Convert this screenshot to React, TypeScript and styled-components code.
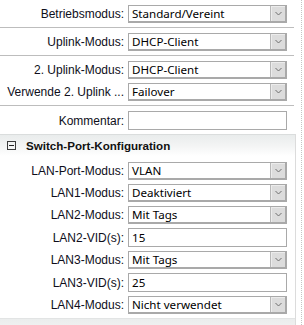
import React from 'react';
import styled, { createGlobalStyle } from 'styled-components';

const GlobalStyle = createGlobalStyle`
  html, body {
    margin: 0;
    padding: 0;
    background: #ffffff;
  }
  body {
    font-family: 'Liberation Sans', Arial, sans-serif;
    font-size: 12px;
    color: #111111;
  }
`;

const Page = styled.div`
  width: 301px;
  min-height: 325px;
  border-right: 1px dotted #c4c4c4;
  overflow: hidden;
`;

const TopArea = styled.div`
  width: 294px;
`;

const Group = styled.div<{ $divider?: boolean; $top?: number }>`
  display: flex;
  flex-direction: column;
  gap: 4px;
  padding: ${(p) => p.$top ?? 5}px 0 4px;
  border-bottom: ${(p) => (p.$divider ? '1px solid #bdbdbd' : 'none')};
`;

const Row = styled.div`
  display: grid;
  grid-template-columns: 124px 159px;
  column-gap: 4px;
  align-items: center;
`;

const Label = styled.label`
  text-align: right;
  white-space: nowrap;
  overflow: hidden;
  font-size: 12px;
  color: #0e0e1a;
`;

const SelectBox = styled.div`
  display: flex;
  height: 18px;
  box-sizing: border-box;
  border: 1px solid #a9a9a9;
  border-right-width: 2px;
  border-bottom-width: 2px;
  background: #ffffff;
`;

const SelectText = styled.span`
  flex: 1;
  padding-left: 3px;
  line-height: 15px;
  font-family: 'Noto Sans', 'DejaVu Sans', sans-serif;
  font-size: 11.6px;
  color: #000000;
  white-space: nowrap;
  overflow: hidden;
`;

const ArrowButton = styled.span`
  width: 15px;
  box-sizing: border-box;
  border-left: 1px solid #b8b8b8;
  background: #dcdcdc;
  box-shadow: inset 1px 1px 0 #ececec;
  display: flex;
  align-items: center;
  justify-content: center;
`;

const TextBox = styled.div`
  height: 19px;
  box-sizing: border-box;
  border: 1px solid #a9a9a9;
  background: #ffffff;
  padding-left: 3px;
  line-height: 17px;
  font-family: 'Noto Sans', 'DejaVu Sans', sans-serif;
  font-size: 11.6px;
  color: #000000;
`;

const Panel = styled.section`
  width: 296px;
  box-sizing: border-box;
  border-right: 1px solid #dcdcdc;
`;

const SectionHeader = styled.div`
  height: 22px;
  box-sizing: border-box;
  border-top: 1px solid #dadddd;
  background: linear-gradient(#e9ecec, #f4f5f5 55%, #ffffff);
  display: flex;
  align-items: center;
  gap: 10px;
  padding-left: 7px;
`;

const Toggle = styled.span`
  width: 9px;
  height: 9px;
  box-sizing: border-box;
  border: 1px solid #3c3c3c;
  position: relative;
  &::after {
    content: '';
    position: absolute;
    left: 1px;
    right: 1px;
    top: 3px;
    height: 1px;
    background: #222222;
  }
`;

const SectionTitle = styled.span`
  font-weight: bold;
  font-size: 11.6px;
  color: #111111;
`;

const NextBand = styled.div`
  height: 22px;
  border-top: 1px solid #e2e4e4;
  background: linear-gradient(#ebeded, #f7f8f8);
`;

const Chevron = () => (
  <svg width="7" height="5" viewBox="0 0 7 5">
    <path d="M0.5 1 L3.5 4 L6.5 1" fill="none" stroke="#6e6e6e" strokeWidth="1" />
  </svg>
);

const Select = ({ value }: { value: string }) => (
  <SelectBox>
    <SelectText>{value}</SelectText>
    <ArrowButton>
      <Chevron />
    </ArrowButton>
  </SelectBox>
);

type Field = { label: string; select?: string; input?: string };

const ports: Field[] = [
  { label: 'LAN-Port-Modus:', select: 'VLAN' },
  { label: 'LAN1-Modus:', select: 'Deaktiviert' },
  { label: 'LAN2-Modus:', select: 'Mit Tags' },
  { label: 'LAN2-VID(s):', input: '15' },
  { label: 'LAN3-Modus:', select: 'Mit Tags' },
  { label: 'LAN3-VID(s):', input: '25' },
  { label: 'LAN4-Modus:', select: 'Nicht verwendet' },
];

const FieldRow = ({ f }: { f: Field }) => (
  <Row>
    <Label>{f.label}</Label>
    {f.select !== undefined ? <Select value={f.select} /> : <TextBox>{f.input}</TextBox>}
  </Row>
);

export default function App() {
  return (
    <Page>
      <GlobalStyle />
      <TopArea>
        <Group $divider>
          <FieldRow f={{ label: 'Betriebsmodus:', select: 'Standard/Vereint' }} />
        </Group>
        <Group $divider>
          <FieldRow f={{ label: 'Uplink-Modus:', select: 'DHCP-Client' }} />
        </Group>
        <Group $divider>
          <FieldRow f={{ label: '2. Uplink-Modus:', select: 'DHCP-Client' }} />
          <FieldRow f={{ label: 'Verwende 2. Uplink ...', select: 'Failover' }} />
        </Group>
        <Group>
          <FieldRow f={{ label: 'Kommentar:', input: '' }} />
        </Group>
      </TopArea>
      <Panel>
        <SectionHeader>
          <Toggle />
          <SectionTitle>Switch-Port-Konfiguration</SectionTitle>
        </SectionHeader>
        <Group $top={6}>
          {ports.map((f) => (
            <FieldRow key={f.label} f={f} />
          ))}
        </Group>
        <NextBand />
      </Panel>
    </Page>
  );
}
